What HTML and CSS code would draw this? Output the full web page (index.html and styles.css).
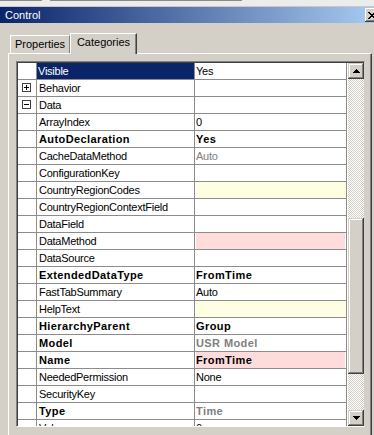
FILE: index.html
```html
<!DOCTYPE html>
<html>
<head>
<meta charset="utf-8">
<link rel="stylesheet" href="styles.css">
</head>
<body>
<div class="topstrip"><span class="seg s1"></span><span class="seg s2"></span></div>
<div class="titlebar">
  <span class="title">Control</span>
  <span class="close"><svg width="8" height="7" viewBox="0 0 8 7" shape-rendering="crispEdges"><path d="M0 0h2v1h1v1h2V1h1V0h2v1H7v1H6v1H5v1h1v1h1v1h1v1H6V6H5V5H3v1H2v1H0V6h1V5h1V4h1V3H2V2H1V1H0z" fill="#000"/></svg></span>
</div>
<div class="tabs">
  <div class="tab">Properties</div>
  <div class="tab active">Categories</div>
</div>
<div class="pane">
  <div class="grid">
    <div class="gridin">
      <div class="rows">
        <div class="row sel"><div class="exp"></div><div class="name">Visible</div><div class="val">Yes</div></div>
        <div class="row"><div class="exp"><svg width="9" height="9" viewBox="0 0 9 9" shape-rendering="crispEdges"><rect x=".5" y=".5" width="8" height="8" fill="#fff" stroke="#404040"/><path d="M2 4.5h5M4.5 2v5" stroke="#000"/></svg></div><div class="name">Behavior</div><div class="val"></div></div>
        <div class="row"><div class="exp"><svg width="9" height="9" viewBox="0 0 9 9" shape-rendering="crispEdges"><rect x=".5" y=".5" width="8" height="8" fill="#fff" stroke="#404040"/><path d="M2 4.5h5" stroke="#000"/></svg></div><div class="name">Data</div><div class="val"></div></div>
        <div class="row"><div class="exp"></div><div class="name">ArrayIndex</div><div class="val">0</div></div>
        <div class="row"><div class="exp"></div><div class="name b">AutoDeclaration</div><div class="val b">Yes</div></div>
        <div class="row"><div class="exp"></div><div class="name">CacheDataMethod</div><div class="val dim">Auto</div></div>
        <div class="row"><div class="exp"></div><div class="name">ConfigurationKey</div><div class="val"></div></div>
        <div class="row"><div class="exp"></div><div class="name">CountryRegionCodes</div><div class="val yl"></div></div>
        <div class="row"><div class="exp"></div><div class="name">CountryRegionContextField</div><div class="val"></div></div>
        <div class="row"><div class="exp"></div><div class="name">DataField</div><div class="val"></div></div>
        <div class="row"><div class="exp"></div><div class="name">DataMethod</div><div class="val pk"></div></div>
        <div class="row"><div class="exp"></div><div class="name">DataSource</div><div class="val"></div></div>
        <div class="row"><div class="exp"></div><div class="name b">ExtendedDataType</div><div class="val b">FromTime</div></div>
        <div class="row"><div class="exp"></div><div class="name">FastTabSummary</div><div class="val">Auto</div></div>
        <div class="row"><div class="exp"></div><div class="name">HelpText</div><div class="val yl"></div></div>
        <div class="row"><div class="exp"></div><div class="name b">HierarchyParent</div><div class="val b">Group</div></div>
        <div class="row"><div class="exp"></div><div class="name b">Model</div><div class="val b dim">USR Model</div></div>
        <div class="row"><div class="exp"></div><div class="name b">Name</div><div class="val b pk">FromTime</div></div>
        <div class="row"><div class="exp"></div><div class="name">NeededPermission</div><div class="val">None</div></div>
        <div class="row"><div class="exp"></div><div class="name">SecurityKey</div><div class="val"></div></div>
        <div class="row"><div class="exp"></div><div class="name b">Type</div><div class="val b dim">Time</div></div>
        <div class="row"><div class="exp"></div><div class="name">Value</div><div class="val">0</div></div>
      </div>
      <div class="sb">
        <div class="sbtn"><svg width="7" height="4" viewBox="0 0 7 4" shape-rendering="crispEdges"><path d="M3 0h1v1h1v1h1v1h1v1H0V3h1V2h1V1h1z" fill="#000"/></svg></div>
        <div class="track"><div class="thumb"></div></div>
        <div class="sbtn"><svg width="7" height="4" viewBox="0 0 7 4" shape-rendering="crispEdges"><path d="M0 0h7v1H6v1H5v1H4v1H3V3H2V2H1V1H0z" fill="#000"/></svg></div>
      </div>
    </div>
  </div>
</div>
</body>
</html>
```
FILE: styles.css
```css
html, body {
  margin: 0;
  padding: 0;
}
body {
  background: #d4d0c8;
  font-family: "Liberation Sans", Arial, sans-serif;
  font-size: 11px;
  color: #000;
  height: 435px;
  overflow: hidden;
  letter-spacing: -0.25px;
}
.topstrip {
  height: 7px;
  background: #ececec;
  display: flex;
  align-items: flex-start;
  box-shadow: inset 0 -1px #c8c8c8;
}
.seg {
  display: block;
  height: 1px;
  background: #8a8a8a;
}
.s1 { width: 42px; }
.s2 { width: 192px; margin-left: 8px; }

.titlebar {
  height: 16px;
  background: linear-gradient(to right, #0a246a, #a6caf0);
  display: flex;
  align-items: center;
  color: #fff;
  line-height: 16px;
}
.title {
  flex: 1;
  padding-left: 5px;
  letter-spacing: 0;
}
.close {
  width: 16px;
  height: 14px;
  margin-right: -7px;
  box-sizing: border-box;
  background: #d4d0c8;
  box-shadow: inset -1px -1px #404040, inset 1px 1px #fff, inset -2px -2px #808080;
  display: flex;
  align-items: center;
  padding-left: 3px;
}
.close svg { display: block; }

.tabs {
  display: flex;
  align-items: flex-end;
  margin-top: 10px;
  padding-left: 10px;
  height: 20px;
}
.tab {
  height: 18px;
  width: 60px;
  box-sizing: border-box;
  border-top: 1px solid #fff;
  border-left: 1px solid #fff;
  border-right: 1px solid #808080;
  text-align: center;
  line-height: 16px;
  letter-spacing: 0;
}
.tab.active {
  height: 21px;
  width: 67px;
  margin-bottom: -1px;
  position: relative;
  z-index: 1;
  background: #d4d0c8;
  border-right-color: #404040;
  box-shadow: inset -1px 0 #808080;
}

.pane {
  margin-left: 8px;
  width: 364px;
  height: 400px;
  box-sizing: border-box;
  border-top: 1px solid #fff;
  border-left: 1px solid #fff;
  border-right: 1px solid #404040;
  box-shadow: inset -1px 0 #808080;
  padding: 7px 0 0 7px;
}
.grid {
  width: 349px;
  height: 366px;
  box-sizing: border-box;
  border: 1px solid;
  border-color: #808080 #d4d0c8 #fff #808080;
}
.gridin {
  height: 100%;
  box-sizing: border-box;
  border-top: 1px solid #404040;
  border-left: 1px solid #404040;
  display: flex;
}
.rows {
  width: 330px;
  background: #fff;
  overflow: hidden;
}
.row {
  display: grid;
  grid-template-columns: 19px 158px 152px;
  height: 17px;
}
.row > div {
  box-sizing: border-box;
  border-bottom: 1px solid #8c8c8c;
  border-right: 1px solid #8c8c8c;
  line-height: 16px;
  white-space: nowrap;
  overflow: hidden;
  padding-left: 1px;
}
.row > .name { padding-left: 2px; }
.row > .exp {
  padding: 3px 0 0 4px;
}
.exp svg { display: block; }
.row.sel .name {
  background: #0a246a;
  color: #fff;
  padding-left: 1px;
}
.b {
  font-weight: bold;
  letter-spacing: 0.4px;
}
.dim { color: #808080; }
.row > .yl {
  background: #fefee2;
  box-shadow: inset 1px 0 #fff;
}
.row > .pk {
  background: #ffdcdc;
  box-shadow: inset 1px 0 #fff, inset -1px 0 #fff;
}

.sb {
  width: 16px;
  display: flex;
  flex-direction: column;
}
.sbtn {
  height: 16px;
  flex: none;
  background: #d4d0c8;
  box-shadow: inset -1px -1px #404040, inset 1px 1px #d4d0c8, inset -2px -2px #808080, inset 2px 2px #fff;
  display: flex;
  align-items: center;
  justify-content: center;
  padding-left: 1px;
  box-sizing: border-box;
}
.sbtn svg { display: block; }
.track {
  flex: 1;
  background: repeating-conic-gradient(#d4d0c8 0 25%, #fff 0 50%) 0 0 / 2px 2px;
}
.thumb {
  margin-top: 139px;
  height: 156px;
  background: #d4d0c8;
  box-shadow: inset -1px -1px #404040, inset 1px 1px #d4d0c8, inset -2px -2px #808080, inset 2px 2px #fff;
}
```
